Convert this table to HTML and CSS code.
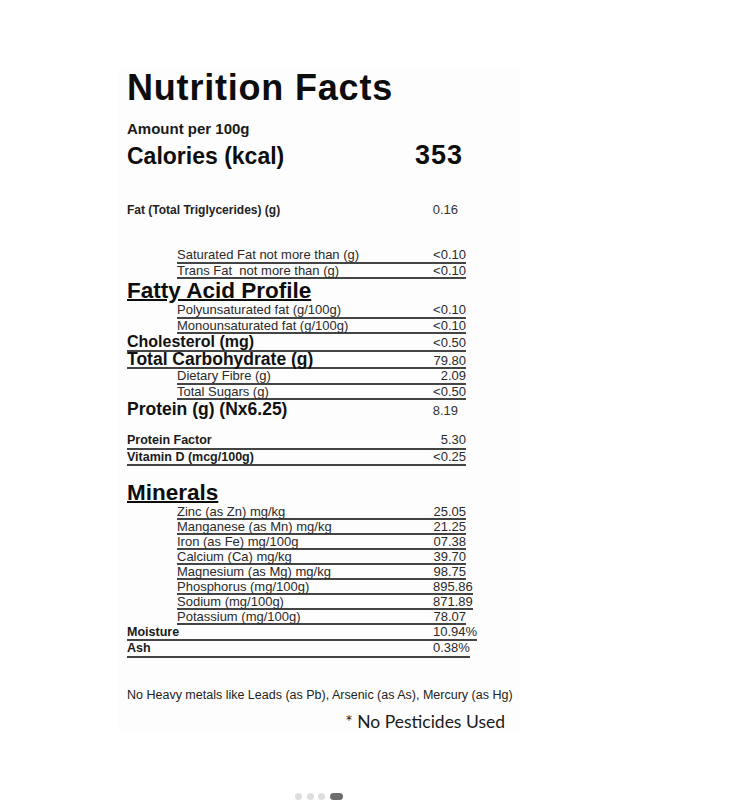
FILE: index.html
```html
<!DOCTYPE html>
<html lang="en">
<head>
    <meta charset="UTF-8">
    <meta name="viewport" content="width=device-width, initial-scale=1.0">
    <title>Nutrition Facts</title>
    <link rel="stylesheet" href="styles.css">
</head>
<body>
<div class="gallery">
  <div class="sheet">
    <h1 class="title">Nutrition Facts</h1>
    <div class="amount">Amount per 100g</div>
    <div class="calories">
      <span>Calories (kcal)</span>
      <span class="kcal">353</span>
    </div>
    <div class="plain fat">
      <span class="k">Fat (Total Triglycerides) (g)</span>
      <span class="v">0.16</span>
    </div>

    <div class="list first">
      <div class="row sub"><span class="k">Saturated Fat not more than (g)</span><span class="v">&lt;0.10</span></div>
      <div class="row sub"><span class="k">Trans Fat&nbsp; not more than (g)</span><span class="v">&lt;0.10</span></div>
      <div class="sect">Fatty Acid Profile</div>
      <div class="row sub"><span class="k">Polyunsaturated fat (g/100g)</span><span class="v">&lt;0.10</span></div>
      <div class="row sub"><span class="k">Monounsaturated fat (g/100g)</span><span class="v">&lt;0.10</span></div>
      <div class="row big"><span class="k">Cholesterol (mg)</span><span class="v">&lt;0.50</span></div>
      <div class="row big carb"><span class="k">Total Carbohydrate (g)</span><span class="v">79.80</span></div>
      <div class="row sub"><span class="k">Dietary Fibre (g)</span><span class="v">2.09</span></div>
      <div class="row sub"><span class="k">Total Sugars (g)</span><span class="v">&lt;0.50</span></div>
    </div>
    <div class="plain protein">
      <span class="k">Protein (g) (Nx6.25)</span>
      <span class="v">8.19</span>
    </div>

    <div class="list factor">
      <div class="row strong"><span class="k">Protein Factor</span><span class="v">5.30</span></div>
      <div class="row strong"><span class="k">Vitamin D (mcg/100g)</span><span class="v">&lt;0.25</span></div>
    </div>

    <div class="list minerals">
      <div class="sect">Minerals</div>
      <div class="row sub"><span class="k">Zinc (as Zn) mg/kg</span><span class="v">25.05</span></div>
      <div class="row sub"><span class="k">Manganese (as Mn) mg/kg</span><span class="v">21.25</span></div>
      <div class="row sub"><span class="k">Iron (as Fe) mg/100g</span><span class="v">07.38</span></div>
      <div class="row sub"><span class="k">Calcium (Ca) mg/kg</span><span class="v">39.70</span></div>
      <div class="row sub"><span class="k">Magnesium (as Mg) mg/kg</span><span class="v">98.75</span></div>
      <div class="row sub"><span class="k">Phosphorus (mg/100g)</span><span class="v">895.86</span></div>
      <div class="row sub"><span class="k">Sodium (mg/100g)</span><span class="v">871.89</span></div>
      <div class="row sub"><span class="k">Potassium (mg/100g)</span><span class="v">78.07</span></div>
      <div class="row strong"><span class="k">Moisture</span><span class="v">10.94%</span></div>
      <div class="row strong"><span class="k">Ash</span><span class="v">0.38%</span></div>
    </div>

    <p class="note">No Heavy metals like Leads (as Pb), Arsenic (as As), Mercury (as Hg)</p>
    <p class="pest">* No Pesticides Used</p>
  </div>

  <div class="dots">
    <span class="dot"></span>
    <span class="dot"></span>
    <span class="dot"></span>
    <span class="dot on"></span>
  </div>
</div>
</body>
</html>
```

FILE: styles.css
```css
body {
    margin: 0;
    background: #fff;
    font-family: "Liberation Sans", Arial, sans-serif;
    color: #222;
}
.sheet {
    margin: 68px 0 0 118px;
    width: 393px;
    padding: 2px 0 0 9px;
    background: #fdfdfd;
}
.title {
    margin: 0;
    font-size: 36px;
    line-height: 36px;
    font-weight: bold;
    letter-spacing: 0.8px;
    color: #0d0d0d;
}
.amount {
    margin-top: 14px;
    font-size: 15px;
    line-height: 18px;
    font-weight: bold;
    color: #1a1a1a;
}
.calories {
    margin-top: 4px;
    width: 336px;
    display: flex;
    justify-content: space-between;
    align-items: baseline;
    font-size: 23px;
    line-height: 26px;
    font-weight: bold;
    color: #0d0d0d;
}
.kcal {
    font-size: 27px;
    letter-spacing: 1px;
}

/* rows without a rule */
.plain {
    width: 331px;
    display: flex;
    justify-content: space-between;
    align-items: baseline;
}
.plain .v {
    font-size: 13px;
    line-height: 15px;
    color: #333;
}
.fat {
    margin-top: 33px;
}
.fat .k {
    font-size: 12px;
    line-height: 15px;
    font-weight: bold;
}
.protein .k {
    font-size: 17.5px;
    line-height: 18px;
    font-weight: bold;
    color: #111;
}

/* underlined rows */
.list {
    display: flex;
    flex-direction: column;
    align-items: flex-start;
}
.first {
    margin-top: 30px;
}
.factor {
    margin-top: 15px;
}
.minerals {
    margin-top: 14.6px;
}
.row {
    display: flex;
    align-items: baseline;
    border-bottom: 2px solid #444;
    font-size: 13px;
    line-height: 13.5px;
    color: #2a2a2a;
}
.minerals .row {
    line-height: 13.1px;
}
.row .k {
    width: 306px;
}
.row.sub {
    margin-left: 50px;
}
.row.sub .k {
    width: 256px;
}
.row .v {
    min-width: 33px;
    text-align: right;
    font-size: 13px;
    font-weight: normal;
}
.row.big .k {
    font-size: 16px;
    line-height: 15px;
    font-weight: bold;
    color: #111;
}
.row.carb .k {
    font-size: 17.5px;
}
.row.strong .k {
    font-size: 12.5px;
    font-weight: bold;
    color: #1a1a1a;
}
.sect {
    font-size: 22.5px;
    line-height: 24px;
    font-weight: bold;
    color: #0d0d0d;
    text-decoration: underline;
    text-decoration-thickness: 2px;
    text-underline-offset: 1px;
}

.note {
    margin: 30px 0 0;
    font-size: 12.5px;
    line-height: 15px;
    color: #222;
}
.pest {
    margin: 8px 0 0;
    width: 378px;
    text-align: right;
    font-family: Lato, "Open Sans", sans-serif;
    font-size: 17.5px;
    line-height: 22px;
    color: #1a1a1a;
}

.dots {
    margin: 60px 0 0 118px;
    width: 402px;
    display: flex;
    justify-content: center;
    gap: 4.5px;
}
.dot {
    width: 7px;
    height: 7px;
    border-radius: 50%;
    background: #dedede;
}
.dot.on {
    width: 13px;
    border-radius: 4px;
    background: #6e6e6e;
}
```
